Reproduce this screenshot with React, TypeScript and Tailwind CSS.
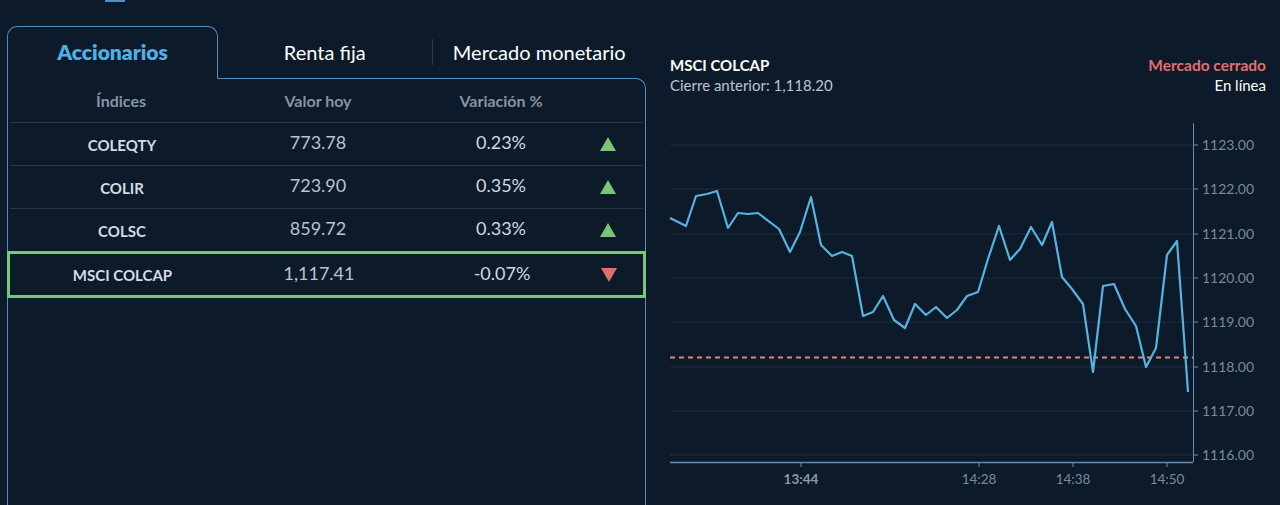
import React from 'react';

type Row = { name: string; value: string; change: string; up: boolean; active?: boolean };

const ROWS: Row[] = [
  { name: 'COLEQTY', value: '773.78', change: '0.23%', up: true },
  { name: 'COLIR', value: '723.90', change: '0.35%', up: true },
  { name: 'COLSC', value: '859.72', change: '0.33%', up: true },
  { name: 'MSCI COLCAP', value: '1,117.41', change: '-0.07%', up: false, active: true },
];

// page coordinates of the series (chart svg uses a page-aligned viewBox)
const SERIES: [number, number][] = [
  [670, 219], [686, 227], [696, 197], [707, 195], [717, 192], [728, 229], [738, 214],
  [748, 215], [758, 214], [779, 230], [790, 253], [800, 233], [811, 198], [821, 246],
  [832, 257], [842, 253], [852, 257], [863, 317], [873, 313], [883, 297], [894, 321],
  [905, 329], [915, 305], [926, 316], [936, 308], [947, 319], [957, 311], [967, 297],
  [978, 293], [988, 260], [999, 227], [1010, 261], [1020, 250], [1031, 228], [1042, 246],
  [1052, 223], [1062, 278], [1072, 290], [1083, 305], [1093, 373], [1103, 287], [1114, 285],
  [1125, 310], [1136, 327], [1146, 368], [1156, 349], [1167, 256], [1177, 242], [1188, 393],
];

const Y_TICKS = [
  { label: '1123.00', y: 146 },
  { label: '1122.00', y: 190 },
  { label: '1121.00', y: 235 },
  { label: '1120.00', y: 279 },
  { label: '1119.00', y: 323 },
  { label: '1118.00', y: 368 },
  { label: '1117.00', y: 412 },
  { label: '1116.00', y: 456 },
];

const X_TICKS = [
  { label: '13:44', x: 801, bold: true },
  { label: '14:28', x: 979 },
  { label: '14:38', x: 1073 },
  { label: '14:50', x: 1167 },
];

function Triangle({ up }: { up: boolean }) {
  return (
    <svg width="16" height="14" viewBox="0 0 16 14">
      {up ? <path d="M8 0 L16 14 L0 14 Z" fill="#7cc576" /> : <path d="M0 0 L16 0 L8 14 Z" fill="#e0706a" />}
    </svg>
  );
}

function Chart() {
  return (
    <svg width="620" height="395" viewBox="660 110 620 395" className="block">
      {Y_TICKS.map(t => (
        <g key={t.label}>
          <line x1="670" x2="1193" y1={t.y} y2={t.y} stroke={t.y === 456 ? '#2a2f47' : '#1d2f42'} strokeWidth="1" />
          <line x1="1193" x2="1198" y1={t.y} y2={t.y} stroke="#5f8fb5" strokeWidth="1" />
          <text x="1202" y={t.y + 5} fill="#7b8a99" fontSize="14" fontFamily="Lato, sans-serif">{t.label}</text>
        </g>
      ))}
      <line x1="670" x2="1193" y1="358.5" y2="358.5" stroke="#e08878" strokeWidth="2" strokeDasharray="5 4" />
      <polyline
        points={SERIES.map(p => p.join(',')).join(' ')}
        fill="none"
        stroke="#58b2e0"
        strokeWidth="2.2"
        strokeLinejoin="round"
      />
      <line x1="1193.5" x2="1193.5" y1="124" y2="463" stroke="#5f8fb5" strokeWidth="1" />
      <line x1="670" x2="1193" y1="463.5" y2="463.5" stroke="#5f8fb5" strokeWidth="1.5" />
      {X_TICKS.map(t => (
        <g key={t.label}>
          <line x1={t.x} x2={t.x} y1="463" y2="468" stroke="#5f8fb5" strokeWidth="1" />
          <text
            x={t.x}
            y="485"
            textAnchor="middle"
            fill={t.bold ? '#8e9aa6' : '#7b8a99'}
            fontWeight={t.bold ? 700 : 400}
            fontSize="13.5"
            fontFamily="Lato, sans-serif"
          >
            {t.label}
          </text>
        </g>
      ))}
    </svg>
  );
}

export default function App() {
  return (
    <div className="w-[1280px] h-[505px] overflow-hidden bg-[#0c1a29] flex font-['Lato',sans-serif]">
      {/* left: indices table */}
      <div className="w-[646px] flex flex-col">
        <div className="ml-[105px] w-[20px] h-[2px] bg-[#4f8fc4]" />
        <div className="mt-[24px] ml-[7px] flex items-end">
          <div className="relative z-10 -mb-px w-[211px] h-[53px] bg-[#0c1a29] border border-b-0 border-[#4f8fc4] rounded-t-[10px] flex items-center justify-center pb-[2px]">
            <span className="text-[21px] font-extrabold text-[#4fb0e6]">Accionarios</span>
          </div>
          <div className="flex-1 h-[52px] flex items-center pb-[1px]">
            <div className="flex-1 text-center text-[20px] text-white">Renta fija</div>
            <div className="w-px h-[26px] bg-[#2c3d4f]" />
            <div className="flex-1 text-center text-[20px] text-white">Mercado monetario</div>
          </div>
        </div>
        <div className="ml-[7px] flex-1 border border-b-0 border-[#4f8fc4] rounded-tr-[10px] relative">
          <div className="grid grid-cols-[226px_168px_198px_16px_1fr] items-center h-[43px] pt-[1px] text-[16px] font-bold text-[#8594a3]">
            <div className="text-center">Índices</div>
            <div className="text-center">Valor hoy</div>
            <div className="text-center">Variación %</div>
            <div />
            <div />
          </div>
          {ROWS.map(r => (
            <div
              key={r.name}
              className={
                r.active
                  ? '-mx-px h-[47px] border-[3px] border-[#77c877] grid grid-cols-[225px_168px_198px_16px_1fr] items-center'
                  : 'mx-[2px] h-[43px] border-t border-[#26384b] grid grid-cols-[224px_168px_198px_16px_1fr] items-center'
              }
            >
              <div className="text-center text-[15px] font-bold text-[#d4dbe2] pt-[2px]">{r.name}</div>
              <div className="text-center text-[18px] text-[#b9c3cd] -mt-[3px]">{r.value}</div>
              <div className="text-center text-[18px] text-[#d3d9df] -mt-[3px]">{r.change}</div>
              <div className="flex justify-center">
                <Triangle up={r.up} />
              </div>
              <div />
            </div>
          ))}
        </div>
      </div>

      {/* right: chart */}
      <div className="flex-1 flex flex-col">
        <div className="ml-[24px] mr-[14px] mt-[55px] flex justify-between">
          <div className="leading-[20px]">
            <div className="text-[15px] font-bold text-white">MSCI COLCAP</div>
            <div className="text-[15px] text-[#bcc6d0]">Cierre anterior: 1,118.20</div>
          </div>
          <div className="leading-[20px] text-right">
            <div className="text-[15.5px] font-bold text-[#e07070]">Mercado cerrado</div>
            <div className="text-[15px] text-white">En línea</div>
          </div>
        </div>
        <div className="mt-[14px] ml-[14px]">
          <Chart />
        </div>
      </div>
    </div>
  );
}
